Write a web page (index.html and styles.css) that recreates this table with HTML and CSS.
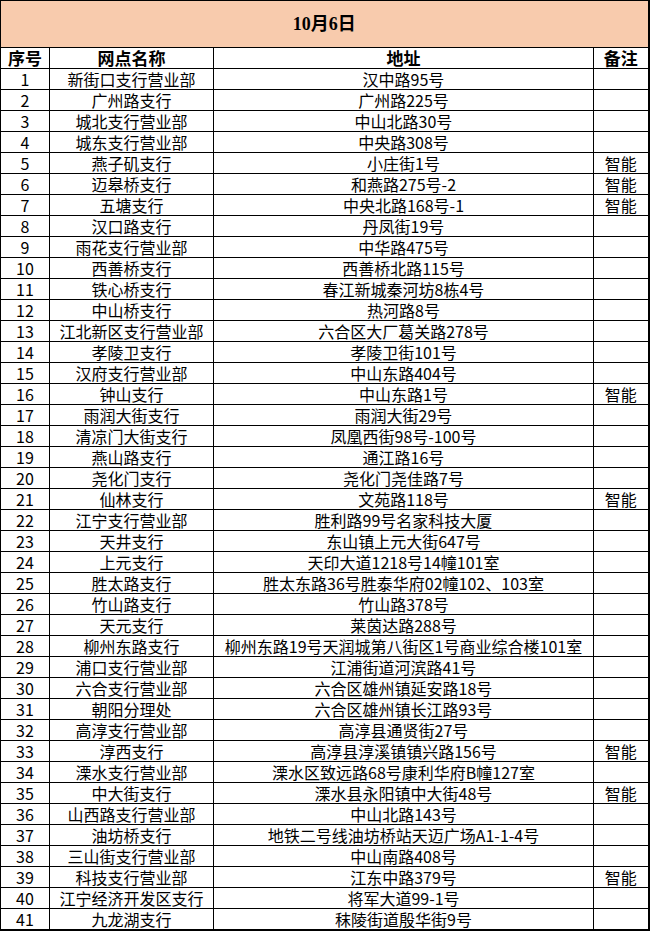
FILE: index.html
```html
<!DOCTYPE html>
<html lang="zh-CN">
<head>
<meta charset="utf-8">
<title>10月6日</title>
<link rel="stylesheet" href="styles.css">
</head>
<body>
<table class="sheet">
  <colgroup>
    <col class="c-no"><col class="c-name"><col class="c-addr"><col class="c-note">
  </colgroup>
  <thead>
    <tr class="title-row"><th colspan="4" class="title">10月6日</th></tr>
    <tr class="head-row"><th>序号</th><th>网点名称</th><th>地址</th><th>备注</th></tr>
  </thead>
  <tbody>
    <tr><td>1</td><td>新街口支行营业部</td><td>汉中路95号</td><td></td></tr>
    <tr><td>2</td><td>广州路支行</td><td>广州路225号</td><td></td></tr>
    <tr><td>3</td><td>城北支行营业部</td><td>中山北路30号</td><td></td></tr>
    <tr><td>4</td><td>城东支行营业部</td><td>中央路308号</td><td></td></tr>
    <tr><td>5</td><td>燕子矶支行</td><td>小庄街1号</td><td>智能</td></tr>
    <tr><td>6</td><td>迈皋桥支行</td><td>和燕路275号-2</td><td>智能</td></tr>
    <tr><td>7</td><td>五塘支行</td><td>中央北路168号-1</td><td>智能</td></tr>
    <tr><td>8</td><td>汉口路支行</td><td>丹凤街19号</td><td></td></tr>
    <tr><td>9</td><td>雨花支行营业部</td><td>中华路475号</td><td></td></tr>
    <tr><td>10</td><td>西善桥支行</td><td>西善桥北路115号</td><td></td></tr>
    <tr><td>11</td><td>铁心桥支行</td><td>春江新城秦河坊8栋4号</td><td></td></tr>
    <tr><td>12</td><td>中山桥支行</td><td>热河路8号</td><td></td></tr>
    <tr><td>13</td><td>江北新区支行营业部</td><td>六合区大厂葛关路278号</td><td></td></tr>
    <tr><td>14</td><td>孝陵卫支行</td><td>孝陵卫街101号</td><td></td></tr>
    <tr><td>15</td><td>汉府支行营业部</td><td>中山东路404号</td><td></td></tr>
    <tr><td>16</td><td>钟山支行</td><td>中山东路1号</td><td>智能</td></tr>
    <tr><td>17</td><td>雨润大街支行</td><td>雨润大街29号</td><td></td></tr>
    <tr><td>18</td><td>清凉门大街支行</td><td>凤凰西街98号-100号</td><td></td></tr>
    <tr><td>19</td><td>燕山路支行</td><td>通江路16号</td><td></td></tr>
    <tr><td>20</td><td>尧化门支行</td><td>尧化门尧佳路7号</td><td></td></tr>
    <tr><td>21</td><td>仙林支行</td><td>文苑路118号</td><td>智能</td></tr>
    <tr><td>22</td><td>江宁支行营业部</td><td>胜利路99号名家科技大厦</td><td></td></tr>
    <tr><td>23</td><td>天井支行</td><td>东山镇上元大街647号</td><td></td></tr>
    <tr><td>24</td><td>上元支行</td><td>天印大道1218号14幢101室</td><td></td></tr>
    <tr><td>25</td><td>胜太路支行</td><td>胜太东路36号胜泰华府02幢102、103室</td><td></td></tr>
    <tr><td>26</td><td>竹山路支行</td><td>竹山路378号</td><td></td></tr>
    <tr><td>27</td><td>天元支行</td><td>莱茵达路288号</td><td></td></tr>
    <tr><td>28</td><td>柳州东路支行</td><td>柳州东路19号天润城第八街区1号商业综合楼101室</td><td></td></tr>
    <tr><td>29</td><td>浦口支行营业部</td><td>江浦街道河滨路41号</td><td></td></tr>
    <tr><td>30</td><td>六合支行营业部</td><td>六合区雄州镇延安路18号</td><td></td></tr>
    <tr><td>31</td><td>朝阳分理处</td><td>六合区雄州镇长江路93号</td><td></td></tr>
    <tr><td>32</td><td>高淳支行营业部</td><td>高淳县通贤街27号</td><td></td></tr>
    <tr><td>33</td><td>淳西支行</td><td>高淳县淳溪镇镇兴路156号</td><td>智能</td></tr>
    <tr><td>34</td><td>溧水支行营业部</td><td>溧水区致远路68号康利华府B幢127室</td><td></td></tr>
    <tr><td>35</td><td>中大街支行</td><td>溧水县永阳镇中大街48号</td><td>智能</td></tr>
    <tr><td>36</td><td>山西路支行营业部</td><td>中山北路143号</td><td></td></tr>
    <tr><td>37</td><td>油坊桥支行</td><td>地铁二号线油坊桥站天迈广场A1-1-4号</td><td></td></tr>
    <tr><td>38</td><td>三山街支行营业部</td><td>中山南路408号</td><td></td></tr>
    <tr><td>39</td><td>科技支行营业部</td><td>江东中路379号</td><td>智能</td></tr>
    <tr><td>40</td><td>江宁经济开发区支行</td><td>将军大道99-1号</td><td></td></tr>
    <tr><td>41</td><td>九龙湖支行</td><td>秣陵街道殷华街9号</td><td></td></tr>
  </tbody>
</table>
</body>
</html>
```

FILE: styles.css
```css
html, body {
  margin: 0;
  padding: 0;
  background: #ffffff;
}

.sheet {
  border-collapse: collapse;
  table-layout: fixed;
  width: 648px;
  font-family: "Noto Sans CJK SC", "Noto Sans", sans-serif;
  font-size: 16px;
  color: #000000;
  border-top: 1px solid #000;
  border-left: 1px solid #000;
  border-right: 2px solid #000;
  border-bottom: 2px solid #000;
}

.c-no { width: 49px; }
.c-name { width: 164px; }
.c-addr { width: 380px; }
.c-note { width: 55px; }

.sheet th,
.sheet td {
  border: 1px solid #000;
  padding: 0;
  text-align: center;
  vertical-align: middle;
  white-space: nowrap;
  line-height: 20px;
}

.sheet tbody tr,
.head-row {
  height: 21px;
}

.title-row {
  height: 47px;
}

.title {
  background: #f8cbad;
  font-family: "Liberation Serif", "Noto Sans CJK SC", serif;
  font-size: 18px;
  font-weight: bold;
  padding-top: 4px;
}

.head-row th {
  font-size: 17px;
  font-weight: bold;
}
```
